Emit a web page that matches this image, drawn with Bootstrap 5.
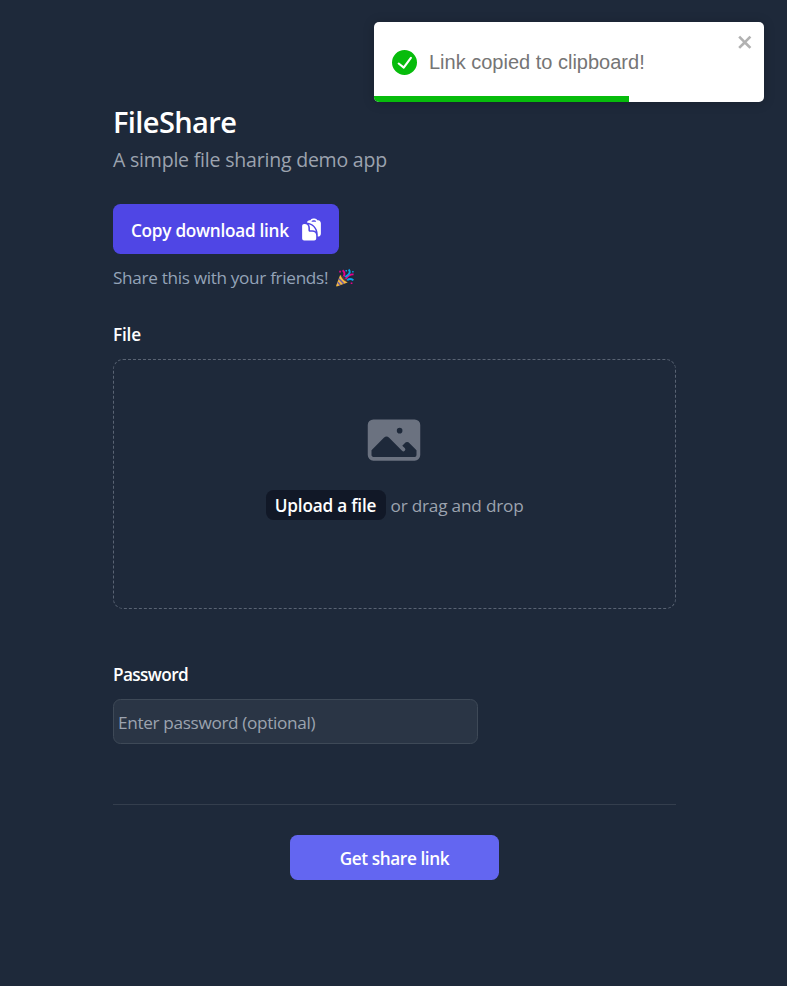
<!DOCTYPE html>
<html lang="en">
<head>
<meta charset="utf-8">
<meta name="viewport" content="width=device-width, initial-scale=1">
<title>FileShare</title>
<link href="https://cdn.jsdelivr.net/npm/bootstrap@5.3.0/dist/css/bootstrap.min.css" rel="stylesheet">
<style>
body{background:#1e293a;color:#fff;font-family:"Open Sans","Noto Sans",sans-serif;font-size:17.2px;line-height:25px;min-height:986px}
.page{width:563px;margin-left:113px;padding-top:104px}
.soft{color:#9ca3af}
.semi{font-weight:600}
.title{font-size:29px;line-height:35px;letter-spacing:-.6px}
.subtitle{font-size:19.5px;line-height:30px;margin-top:6px;letter-spacing:-.2px}
.copy-btn{width:226px;height:50px;margin-top:29px;padding:2px 15px 0 18px;background:#4f46e5;border-radius:7.5px;color:#fff;border:0;letter-spacing:-.27px}
.copy-btn svg{margin-top:-2px}
.share-note{margin-top:11px;color:#94a3b8;letter-spacing:-.33px}
.share-note svg{margin-left:7px}
.file-label{margin-top:32px;letter-spacing:-.2px}
.dropzone{height:250px;margin-top:12px;border:1px dashed #596373;border-radius:10px;padding-top:50px}
.photo-icon{margin-right:2px}
.upload-line{margin-top:20px;height:30px;gap:5px}
.upload-line span{letter-spacing:-.2px}
.file-chip{background:#111827;border-radius:7.5px;height:30px;width:120px;line-height:31px}
.drag-hint{line-height:31px}
.pass-label{margin-top:53px;letter-spacing:-.6px}
.pass-input{width:365px;height:45px;margin-top:12px;background:#2a3545;border:1px solid #3e4957;border-radius:7.5px;padding:2px 5px 0 4px;color:#fff;letter-spacing:-.34px}
.pass-input::placeholder{color:#9ca3af;opacity:1}
.divider{height:1px;background:#343e4d;margin-top:60px}
.submit-btn{width:209px;height:45px;margin-top:30px;padding-top:3px;background:#6366f1;border:0;border-radius:7.5px;color:#fff;letter-spacing:-.4px}
.notice{position:absolute;left:374px;top:22px;width:390px;height:80px;padding-left:18px;background:#fff;border-radius:5px;box-shadow:0 1px 12px rgba(0,0,0,.2);overflow:hidden;color:#757575;font:20px/25px "Liberation Sans",Arial,sans-serif}
.notice-text{margin-left:12px}
.notice-bar{position:absolute;left:0;bottom:0;width:255px;height:6px;background:#07bc0c}
.notice-close{position:absolute;right:10px;top:10px;padding:0;border:0;background:none;opacity:.3;color:#000;line-height:0}
</style>
<script src="https://cdn.jsdelivr.net/npm/bootstrap@5.3.0/dist/js/bootstrap.bundle.min.js"></script>
</head>
<body>
<main class="page d-flex flex-column">
<h1 class="title semi mb-0">FileShare</h1>
<p class="subtitle soft mb-0">A simple file sharing demo app</p>
<button class="copy-btn semi d-flex align-items-center justify-content-between" type="button"><span>Copy download link</span>
<svg width="25" height="25" viewBox="0 0 24 24" fill="#fff"><path fill-rule="evenodd" d="M17.663 3.118c.225.015.45.032.673.05C19.876 3.298 21 4.604 21 6.109v9.642a3 3 0 01-3 3V16.5c0-5.922-4.576-10.775-10.384-11.217.324-1.132 1.3-2.01 2.548-2.114.224-.019.448-.036.673-.051A3 3 0 0113.5 1.5H15a3 3 0 012.663 1.618zM12 4.5A1.5 1.5 0 0113.5 3H15a1.5 1.5 0 011.5 1.5H12z"/><path d="M3 8.625c0-1.036.84-1.875 1.875-1.875h.375A3.75 3.75 0 019 10.5v1.875c0 1.036.84 1.875 1.875 1.875h1.875A3.75 3.75 0 0116.5 18v2.625c0 1.035-.84 1.875-1.875 1.875h-9.75A1.875 1.875 0 013 20.625v-12z"/><path d="M10.5 10.5a5.23 5.23 0 00-1.279-3.434 9.768 9.768 0 016.963 6.963 5.23 5.23 0 00-3.434-1.279h-1.875a.375.375 0 01-.375-.375V10.5z"/></svg></button>
<p class="share-note mb-0 d-flex align-items-center">Share this with your friends!
<svg width="20" height="20" viewBox="0 0 20 20" fill="none"><path d="M5.2 6.8 12.6 14.5 1.8 18.4Q1 18.4 1.2 17.5Z" fill="#f5b83d"/><path d="M4 10.8 8.7 15.8M2.7 14.3 5.3 17" stroke="#6b5aa8" stroke-width="1.5"/><path d="M5.3 6.8Q10.7 9 12.5 14.4Q8 13 5.3 6.8Z" fill="#4a3940"/><path d="M7.6 2.2Q10.6 4.5 8.8 8.5M10.8 11Q14 6 18.6 6.4" stroke="#e3008c" stroke-width="1.9"/><path d="M13.6 1.5Q16.3 4 12.9 7.1L10.2 9M12.2 12.2Q15 9.8 18.4 12.2" stroke="#0a9fe8" stroke-width="1.9"/><path d="M4.2 2.8h1.7v1.7H4.2zM15.7 14.5h1.7v1.6h-1.7z" fill="#e3008c"/><path d="M10.5 2h1.5v1.5h-1.5zM17.2 3h1.4v1.4h-1.4z" fill="#0a9fe8"/></svg></p>
<div class="file-label semi">File</div>
<section class="dropzone d-flex flex-column align-items-center">
<svg class="photo-icon" width="60" height="60" viewBox="0 0 24 24" fill="#6b7280"><path fill-rule="evenodd" d="M1.5 6a2.25 2.25 0 012.25-2.25h16.5A2.25 2.25 0 0122.5 6v12a2.25 2.25 0 01-2.25 2.25H3.75A2.25 2.25 0 011.5 18V6zM3 16.06V18c0 .414.336.75.75.75h16.5A.75.75 0 0021 18v-1.94l-2.69-2.689a1.5 1.5 0 00-2.12 0l-.88.879.97.97a.75.75 0 11-1.06 1.06l-5.16-5.159a1.5 1.5 0 00-2.12 0L3 16.061zm10.125-7.81a1.125 1.125 0 112.25 0 1.125 1.125 0 01-2.25 0z"/></svg>
<div class="upload-line d-flex"><span class="file-chip semi text-center">Upload a file</span><span class="drag-hint soft">or drag and drop</span></div>
</section>
<label class="pass-label semi" for="password">Password</label>
<input class="pass-input" id="password" type="password" placeholder="Enter password (optional)">
<div class="divider"></div>
<button class="submit-btn semi align-self-center" type="button">Get share link</button>
</main>
<div class="notice d-flex align-items-center" role="alert">
<svg width="25" height="25" viewBox="0 0 24 24" fill="#07bc0c"><path d="M12 0a12 12 0 1012 12A12.014 12.014 0 0012 0zm6.927 8.2l-6.845 9.289a1.011 1.011 0 01-1.43.188l-4.888-3.908a1 1 0 111.25-1.562l4.076 3.261 6.227-8.451a1 1 0 111.61 1.183z"/></svg>
<span class="notice-text">Link copied to clipboard!</span>
<button class="notice-close" type="button" aria-label="Close"><svg width="17.5" height="20" viewBox="0 0 14 16"><path fill="currentColor" fill-rule="evenodd" d="M7.71 8.23l3.75 3.75-1.48 1.48-3.75-3.75-3.75 3.75L1 11.98l3.75-3.75L1 4.48 2.48 3l3.75 3.75L9.98 3l1.48 1.48-3.75 3.75z"/></svg></button>
<div class="notice-bar"></div>
</div>
</body>
</html>
